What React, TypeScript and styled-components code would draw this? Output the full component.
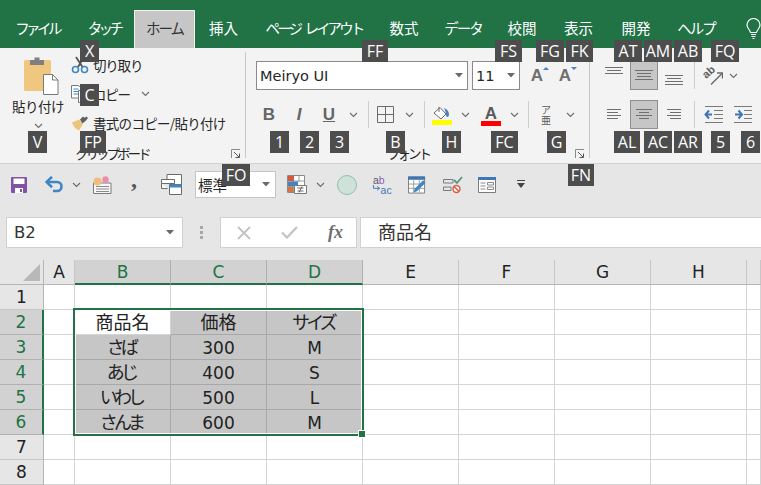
import React from 'react';
import styled, { createGlobalStyle } from 'styled-components';

const GREEN = '#217346';
const FONT = '"DejaVu Sans", "Noto Sans CJK JP", sans-serif';
const CJK = '"Noto Sans CJK JP", "DejaVu Sans", sans-serif';

const GlobalStyle = createGlobalStyle`
  html, body { margin: 0; padding: 0; background: #fff; }
  body { font-family: ${FONT}; overflow: hidden; }
`;

const TABS = [
  { label: 'ファイル', w: 74, ls: -3.6 },
  { label: 'タッチ', w: 60, ls: -3.6 },
  { label: 'ホーム', w: 61, ls: -2 },
  { label: '挿入', w: 57, ls: 0 },
  { label: 'ページ\u00a0レイアウト', w: 124, ls: -2.9 },
  { label: '数式', w: 56, ls: 0 },
  { label: 'データ', w: 62, ls: -2 },
  { label: '校閲', w: 56, ls: 0 },
  { label: '表示', w: 57, ls: 0 },
  { label: '開発', w: 58, ls: 0 },
  { label: 'ヘルプ', w: 62, ls: -2 },
];

const KEY_TIPS = [
  ['X', 80, 40, 19], ['C', 80, 84, 19], ['V', 28, 131, 19], ['FP', 80, 131, 26],
  ['FF', 362, 40, 26], ['FS', 495, 40, 27], ['FG', 536, 40, 28], ['FK', 566, 40, 27],
  ['AT', 614, 40, 28], ['AM', 644, 40, 28], ['AB', 674, 40, 28], ['FQ', 711, 40, 28],
  ['1', 270, 131, 19], ['2', 300, 131, 19], ['3', 330, 131, 19], ['B', 386, 131, 19],
  ['H', 442, 131, 19], ['FC', 491, 131, 27], ['G', 547, 131, 19],
  ['AL', 614, 131, 26], ['AC', 644, 131, 28], ['AR', 674, 131, 28], ['5', 711, 131, 19], ['6', 741, 131, 19],
  ['FN', 568, 164, 26], ['FO', 222, 164, 28],
] as const;

// the last column runs off the window, its letter is out of view
const COLUMNS = ['A', 'B', 'C', 'D', 'E', 'F', 'G', 'H', ''];
const SELECTED_COLUMNS = ['B', 'C', 'D'];
type CellData = { text: string; ja?: boolean; kana?: boolean };
const TABLE: Record<number, CellData[]> = {
  2: [{ text: '商品名', ja: true }, { text: '価格', ja: true }, { text: 'サイズ', ja: true, kana: true }],
  3: [{ text: 'さば', ja: true, kana: true }, { text: '300' }, { text: 'M' }],
  4: [{ text: 'あじ', ja: true, kana: true }, { text: '400' }, { text: 'S' }],
  5: [{ text: 'いわし', ja: true, kana: true }, { text: '500' }, { text: 'L' }],
  6: [{ text: 'さんま', ja: true, kana: true }, { text: '600' }, { text: 'M' }],
};

const Chevron = () => (
  <svg width="9" height="6" viewBox="0 0 9 6">
    <path d="M1 1l3.5 3.5L8 1" fill="none" stroke="#6b6b6b" strokeWidth="1.1" />
  </svg>
);

const Caret = () => (
  <svg width="8" height="5" viewBox="0 0 8 5">
    <path d="M0 0h8L4 4.5z" fill="#6a6a6a" />
  </svg>
);

const Launcher = () => (
  <svg width="10" height="10" viewBox="0 0 10 10">
    <path d="M.5 9V.5H9" fill="none" stroke="#8a8a8a" />
    <path d="M3 3l5 5M4.5 8.5h4v-4" fill="none" stroke="#555" />
  </svg>
);

const PasteIcon = () => (
  <svg width="36" height="39" viewBox="0 0 36 39">
    <rect x="0" y="4" width="27" height="31" rx="1.5" fill="#f0c77e" />
    <path d="M6 9V4h4.5V1.5h5V4H20v5z" fill="#7f7f7f" />
    <path d="M19.5 18.5h9l5.5 5.5v14.5H19.5z" fill="#fff" stroke="#7a7a7a" />
    <path d="M28.5 18.5v5.5H34" fill="none" stroke="#7a7a7a" />
  </svg>
);

const ScissorsIcon = () => (
  <svg width="18" height="19" viewBox="0 0 18 19">
    <path d="M5 2l6.5 10M13 2L7 12" stroke="#555" strokeWidth="1.8" fill="none" />
    <circle cx="4.5" cy="14.5" r="3" fill="none" stroke="#3f86c6" strokeWidth="1.6" />
    <circle cx="13.5" cy="14.5" r="3" fill="none" stroke="#3f86c6" strokeWidth="1.6" />
  </svg>
);

const CopyIcon = () => (
  <svg width="20" height="18" viewBox="0 0 20 18">
    <path d="M.5.5h7l2 2V13h-9z" fill="#fff" stroke="#7a7a7a" />
    <path d="M2.5 4h5M2.5 6.5h5M2.5 9h5" stroke="#3f86c6" />
    <path d="M7.5 5.5h7l2 2V17.5h-9z" fill="#fff" stroke="#7a7a7a" />
  </svg>
);

const BrushIcon = () => (
  <svg width="18" height="16" viewBox="0 0 18 16">
    <path d="M1 7.5L8 4.5l4 4.5-4 6.5C5 14.5 2 11 1 7.5z" fill="#eec47c" />
    <path d="M9 4.5L12 1.5l1.5 1.2 2-1.2 1.5 1.5-2 2.5-3.5 3z" fill="#5f5f5f" />
  </svg>
);

const BorderIcon = () => (
  <svg width="17" height="17" viewBox="0 0 17 17">
    <path d="M.5.5h16v16H.5zM8.5.5v16M.5 8.5h16" fill="none" stroke="#6a6a6a" />
  </svg>
);

const BucketIcon = () => (
  <svg width="20" height="14" viewBox="0 0 20 14">
    <path d="M2 7l6-5.5L14 8l-5 5z" fill="#fff" stroke="#6a6a6a" />
    <path d="M7 1v5" stroke="#6a6a6a" />
    <path d="M12 2c3 1 5 3.5 5 6.5 0 1.5-.8 2.5-1.6 2.5-.8 0-1.4-1-1.4-2.5C14 6.5 13 4 12 2z" fill="#4a80bd" />
  </svg>
);

const OrientIcon = () => (
  <svg width="20" height="19" viewBox="0 0 20 19">
    <text x="3" y="13" fontSize="11" fill="#5f5f5f" fontFamily="Liberation Sans, sans-serif" fontWeight="700" transform="rotate(-40 3 13)">ab</text>
    <path d="M8 18.5L19 7.5" stroke="#6a6a6a" strokeWidth="1.4" />
    <path d="M14 7h5.5v5.5" fill="none" stroke="#6a6a6a" strokeWidth="1.4" />
  </svg>
);

const IndentIcon = ({ flip }: { flip?: boolean }) => (
  <svg width="19" height="17" viewBox="0 0 19 17">
    <path d={flip ? 'M0 .5h18M10 4.5h8M10 8.5h8M10 12.5h8M0 16.5h18' : 'M1 .5h18M10 4.5h9M10 8.5h9M10 12.5h9M1 16.5h18'} stroke="#7a7a7a" />
    {flip
      ? <path d="M1 8.5h6M4.5 4.5l3.5 4-3.5 4" fill="none" stroke="#3f76b5" strokeWidth="2" />
      : <path d="M8 8.5H2M5 4.5l-3.5 4 3.5 4" fill="none" stroke="#3f76b5" strokeWidth="2" />}
  </svg>
);

const SaveIcon = () => (
  <svg width="16" height="16" viewBox="0 0 16 16">
    <path d="M0 1a1 1 0 011-1h14a1 1 0 011 1v14a1 1 0 01-1 1H1a1 1 0 01-1-1z" fill="#8253a5" />
    <path d="M2.5 1.5h11V7h-11z" fill="#fff" />
    <path d="M4 11h8v5H4z" fill="#fff" />
    <path d="M9 12h2v3H9z" fill="#8253a5" />
  </svg>
);

const UndoIcon = () => (
  <svg width="19" height="17" viewBox="0 0 19 17">
    <path d="M2.5 6H12c6 0 6 9 0 9H8" fill="none" stroke="#3f86c6" strokeWidth="2.6" />
    <path d="M7 .8L1.500 6 7 11.2" fill="none" stroke="#3f86c6" strokeWidth="2.6" />
  </svg>
);

const NewStyleIcon = () => (
  <svg width="19" height="18" viewBox="0 0 19 18">
    <path d="M.5 7H18v10.5H.5z" fill="#f8f8f8" stroke="#7a7a7a" />
    <path d="M3 10.5h13M3 13h13M3 15.5h13" stroke="#8a8a8a" />
    <circle cx="4.5" cy="5.5" r="4" fill="#efbd7e" />
    <circle cx="12.5" cy="3.5" r="3.2" fill="#eb8fa7" />
  </svg>
);

const WindowsIcon = () => (
  <svg width="21" height="21" viewBox="0 0 21 21">
    <path d="M6 6V.5h14.5v13H15" fill="#fff" stroke="#6a6a6a" />
    <path d="M.5 5.5h13v4H.5zM.5 9.5v5h6" fill="#fff" stroke="#6a6a6a" />
    <path d="M8.5 10.5h12v10h-12z" fill="#fff" stroke="#6a6a6a" />
    <path d="M8.5 10.5h12v3h-12z" fill="#3f86c6" />
  </svg>
);

const CondFormatIcon = () => (
  <svg width="20" height="19" viewBox="0 0 20 19">
    <path d="M.5.5h17v17H.5z" fill="#fff" stroke="#8a8a8a" />
    <path d="M6.5 1v16M12 1v6M1 6h17M1 11.5h6" stroke="#9a9a9a" />
    <path d="M1 1h6v5H1z" fill="#d9573a" />
    <path d="M1 6.5h10V11H1z" fill="#3f86c6" />
    <path d="M1 12h5v5H1z" fill="#e0703f" />
    <path d="M7.5 10.5h12v8h-12z" fill="#fff" stroke="#7a7a7a" />
    <path d="M10.5 13h6M10.5 16h6M15 11.5l-3 6" stroke="#666" />
  </svg>
);

const ReplaceIcon = () => (
  <svg width="21" height="21" viewBox="0 0 21 21">
    <text x="1" y="9.5" fontSize="11" fontFamily="Liberation Sans, sans-serif">
      <tspan fill="#555">a</tspan><tspan fill="#8f5fb5">b</tspan>
    </text>
    <text x="9" y="20" fontSize="11" fontFamily="Liberation Sans, sans-serif" fill="#3f76b5">ac</text>
    <path d="M1.5 11v3.5H8M5.5 12.5l2.5 2-2.500 2" fill="none" stroke="#3f76b5" />
  </svg>
);

const FormIcon = () => (
  <svg width="19" height="18" viewBox="0 0 19 18">
    <path d="M.5.5h17v17H.5z" fill="#fff" stroke="#7a7a7a" />
    <path d="M0 0h18v3.5H0z" fill="#3f76b5" />
    <path d="M6 4v13M12 4v13M1 8h17M1 12.5h17" stroke="#9a9a9a" />
    <path d="M6 17l1-4 9-9 2.5 2.5-9 9z" fill="#3f86c6" />
  </svg>
);

const ValidationIcon = () => (
  <svg width="20" height="18" viewBox="0 0 20 18">
    <path d="M.5 3.5H10V7H.5zM.5 11H8v3.5H.5z" fill="none" stroke="#7a7a7a" />
    <path d="M11 4l3 3 5-6" fill="none" stroke="#4f9a7e" strokeWidth="1.8" />
    <circle cx="13.5" cy="13" r="3.5" fill="#fff" stroke="#e0583f" strokeWidth="1.4" />
    <path d="M11 10.5l5 5" stroke="#e0583f" strokeWidth="1.4" />
  </svg>
);

const FormTableIcon = () => (
  <svg width="18" height="16" viewBox="0 0 18 16">
    <path d="M.5.5h17v15H.5z" fill="#fff" stroke="#7a7a7a" />
    <path d="M0 0h18v3H0z" fill="#3f76b5" />
    <path d="M2.5 6h5M2.5 9h5M2.5 12h5" stroke="#8a8a8a" />
    <path d="M9.5 5.5h6V8h-6zM9.5 10h6v2.500h-6z" fill="none" stroke="#8a8a8a" />
  </svg>
);

const CustomizeIcon = () => (
  <svg width="8" height="9" viewBox="0 0 8 9">
    <path d="M0 .5h8" stroke="#444" />
    <path d="M0 3h8L4 8z" fill="#444" />
  </svg>
);

const CancelIcon = () => (
  <svg width="14" height="14" viewBox="0 0 14 14">
    <path d="M1 1l12 12M13 1L1 13" stroke="#c3c3c3" strokeWidth="1.8" />
  </svg>
);

const EnterIcon = () => (
  <svg width="17" height="13" viewBox="0 0 17 13">
    <path d="M1 6.5l5 5L16 1" fill="none" stroke="#c3c3c3" strokeWidth="2.2" />
  </svg>
);

const BulbIcon = () => (
  <svg width="15" height="22" viewBox="0 0 15 22">
    <path d="M4.5 14.5C4 11.5 1 10.5 1 7a6.5 6.5 0 0113 0c0 3.500-3 4.500-3.500 7.500z" fill="none" stroke="#fff" strokeWidth="1.2" />
    <path d="M5 16.5h5M5.5 18.5h4M6.5 20.5h2" stroke="#fff" strokeWidth="1.2" />
  </svg>
);

const ALIGN_LINES = {
  top: [[0, 0, 18], [2, 3, 14], [0, 6, 18]],
  middle: [[0, 0, 18], [2, 3, 14], [2, 6, 14], [0, 9, 18]],
  bottom: [[0, 0, 18], [2, 3, 14], [0, 6, 18], [0, 9, 18]],
  left: [[2, 0, 14], [2, 3, 11], [2, 6, 14], [2, 9, 11]],
  center: [[1, 0, 16], [4, 3, 10], [1, 6, 16], [4, 9, 10]],
  right: [[2, 0, 14], [5, 3, 11], [2, 6, 14], [5, 9, 11]],
};

const AlignLines = ({ kind }: { kind: keyof typeof ALIGN_LINES }) => (
  <svg width="18" height="11" viewBox="0 0 18 11">
    {ALIGN_LINES[kind].map(([x, y, w]) => (
      <path key={y} d={`M${x} ${y + 0.5}h${w}`} stroke="#6f6f6f" />
    ))}
  </svg>
);

export default function App() {
  return (
    <Frame>
      <GlobalStyle />
      <TabBar>
        {TABS.map((tab) => (
          <Tab key={tab.label} $w={tab.w} $active={tab.label === 'ホーム'} $ls={tab.ls}>{tab.label}</Tab>
        ))}
        <BulbSlot><BulbIcon /></BulbSlot>
      </TabBar>

      <Ribbon>
        <ClipboardGroup>
          <ClipboardBody>
            <PasteButton>
              <PasteIconBox><PasteIcon /></PasteIconBox>
              <PasteLabel>貼り付け</PasteLabel>
              <Chevron />
            </PasteButton>
            <ClipboardList>
              <ClipboardRow><ClipIcon><ScissorsIcon /></ClipIcon><ClipText>切り取り</ClipText></ClipboardRow>
              <ClipboardRow>
                <ClipIcon><CopyIcon /></ClipIcon>
                <ClipText>コピー</ClipText>
                <CopyChevron><Chevron /></CopyChevron>
              </ClipboardRow>
              <ClipboardRow><ClipIcon><BrushIcon /></ClipIcon><ClipText $wide>書式のコピー/貼り付け</ClipText></ClipboardRow>
            </ClipboardList>
          </ClipboardBody>
          <GroupFooter>
            <GroupLabel $left={75}>クリップボード</GroupLabel>
            <LauncherBox $right={4}><Launcher /></LauncherBox>
          </GroupFooter>
        </ClipboardGroup>
        <GroupDivider />

        <FontGroup>
          <ToolRow>
            <FontCombo $w={212}>Meiryo UI<Caret /></FontCombo>
            <FontCombo $w={48} $ml={4}>11<Caret /></FontCombo>
            <Slot $w={30} $ml={2}><GrowLetter>A<GrowMark $up /></GrowLetter></Slot>
            <Slot $w={26}><GrowLetter>A<GrowMark /></GrowLetter></Slot>
          </ToolRow>
          <ToolRow>
            <Slot $w={30}><StyleLetter>B</StyleLetter></Slot>
            <Slot $w={30}><StyleLetter $italic>I</StyleLetter></Slot>
            <Slot $w={30}><StyleLetter $underline>U</StyleLetter></Slot>
            <Slot $w={18}><Chevron /></Slot>
            <Slot $w={12}><ToolDivider /></Slot>
            <Slot $w={23}><BorderIcon /></Slot>
            <Slot $w={24}><Chevron /></Slot>
            <Slot $w={6}><ToolDivider /></Slot>
            <Slot $w={30}><ColorStack><BucketIcon /><ColorBar $color="#ffff00" /></ColorStack></Slot>
            <Slot $w={16}><Chevron /></Slot>
            <Slot $w={36}><ColorStack><ColorLetter>A</ColorLetter><ColorBar $color="#ff0000" /></ColorStack></Slot>
            <Slot $w={10}><Chevron /></Slot>
            <Slot $w={18}><ToolDivider /></Slot>
            <Slot $w={18}><PhoneticStack><span>ア</span><span>亜</span></PhoneticStack></Slot>
            <Slot $w={30}><Chevron /></Slot>
          </ToolRow>
          <GroupFooter>
            <GroupLabel $left={141}>フォント</GroupLabel>
            <LauncherBox $right={4}><Launcher /></LauncherBox>
          </GroupFooter>
        </FontGroup>
        <GroupDivider />

        <AlignGroup>
          <AlignRow>
            <AlignButton><AlignAt $offset={-3}><AlignLines kind="top" /></AlignAt></AlignButton>
            <AlignButton $active><AlignLines kind="middle" /></AlignButton>
            <AlignButton><AlignAt $offset={5}><AlignLines kind="bottom" /></AlignAt></AlignButton>
            <Slot $w={8}><ToolDivider /></Slot>
            <Slot $w={30}><OrientIcon /></Slot>
            <Slot $w={10}><Chevron /></Slot>
          </AlignRow>
          <AlignRow>
            <AlignButton><AlignLines kind="left" /></AlignButton>
            <AlignButton $active><AlignLines kind="center" /></AlignButton>
            <AlignButton><AlignLines kind="right" /></AlignButton>
            <Slot $w={8}><ToolDivider /></Slot>
            <Slot $w={30}><IndentIcon /></Slot>
            <Slot $w={30}><IndentIcon flip /></Slot>
          </AlignRow>
        </AlignGroup>
      </Ribbon>

      <QuickAccess>
        <Slot $w={22}><SaveIcon /></Slot>
        <Slot $w={20} $ml={14}><UndoIcon /></Slot>
        <Slot $w={12} $ml={6}><Chevron /></Slot>
        <Slot $w={20} $ml={10}><NewStyleIcon /></Slot>
        <Slot $w={20} $ml={12}><CommaMark>,</CommaMark></Slot>
        <Slot $w={22} $ml={16}><WindowsIcon /></Slot>
        <StyleCombo>標準<Caret /></StyleCombo>
        <Slot $w={20} $ml={11}><CondFormatIcon /></Slot>
        <Slot $w={12} $ml={7}><Chevron /></Slot>
        <Slot $w={20} $ml={11}><StatusCircle /></Slot>
        <Slot $w={20} $ml={15}><ReplaceIcon /></Slot>
        <Slot $w={18} $ml={16}><FormIcon /></Slot>
        <Slot $w={20} $ml={17}><ValidationIcon /></Slot>
        <Slot $w={18} $ml={15}><FormTableIcon /></Slot>
        <Slot $w={10} $ml={20}><CustomizeIcon /></Slot>
      </QuickAccess>

      <FormulaBar>
        <NameBox>B2<Caret /></NameBox>
        <Grip />
        <FormulaButtons>
          <Slot $w={45}><CancelIcon /></Slot>
          <Slot $w={47}><EnterIcon /></Slot>
          <Slot $w={45}><FxMark>fx</FxMark></Slot>
        </FormulaButtons>
        <FormulaInput>商品名</FormulaInput>
      </FormulaBar>

      <Sheet>
        <CornerCell />
        {COLUMNS.map((col) => (
          <ColumnHead key={col} $selected={SELECTED_COLUMNS.includes(col)}>{col}</ColumnHead>
        ))}
        {[1, 2, 3, 4, 5, 6, 7, 8].map((row) => (
          <React.Fragment key={row}>
            <RowHead $selected={!!TABLE[row]}>{row}</RowHead>
            {COLUMNS.map((col) => {
              const index = SELECTED_COLUMNS.indexOf(col);
              const cell = TABLE[row] && index >= 0 ? TABLE[row][index] : undefined;
              const isActive = row === 2 && col === 'B';
              return (
                <Cell key={col} $selected={!!cell && !isActive} $ja={cell?.ja} $kana={cell?.kana}>
                  {cell?.text}
                </Cell>
              );
            })}
          </React.Fragment>
        ))}
        <Selection><FillHandle /></Selection>
      </Sheet>

      {KEY_TIPS.map(([label, x, y, w]) => (
        <KeyTip key={label} $x={x} $y={y} $w={w}>{label}</KeyTip>
      ))}
    </Frame>
  );
}

const Frame = styled.div`
  position: relative;
  width: 761px;
  height: 485px;
  overflow: hidden;
  background: #e6e6e6;
  color: #262626;
`;

const TabBar = styled.div`
  display: flex;
  height: 48px;
  background: ${GREEN};
  padding-top: 10px;
  box-sizing: border-box;
`;

const Tab = styled.div<{ $w: number; $active?: boolean; $ls: number }>`
  flex: none;
  box-sizing: border-box;
  width: ${({ $w }) => $w}px;
  height: 38px;
  display: flex;
  align-items: center;
  justify-content: center;
  padding-bottom: 4px;
  font-family: ${CJK};
  font-size: 14.5px;
  letter-spacing: ${({ $ls }) => $ls}px;
  word-spacing: 4px;
  white-space: nowrap;
  color: ${({ $active }) => ($active ? '#333' : '#fff')};
  background: ${({ $active }) => ($active ? '#c6c6c6' : 'transparent')};
  border: ${({ $active }) => ($active ? '1px solid #f0f0f0' : 'none')};
  border-bottom: none;
`;

const BulbSlot = styled.div`
  flex: none;
  margin: 0 0 0 19px;
  padding-top: 8px;
`;

const Ribbon = styled.div`
  display: flex;
  box-sizing: border-box;
  height: 116px;
  background: #f3f3f3;
  border-bottom: 1px solid #d2d2d2;
`;

const GroupDivider = styled.div`
  flex: none;
  width: 1px;
  margin: 4px 0 5px;
  background: #c8c8c8;
`;

const ClipboardGroup = styled.div`
  position: relative;
  flex: none;
  width: 245px;
`;

const ClipboardBody = styled.div`
  display: flex;
`;

const PasteButton = styled.div`
  flex: none;
  width: 76px;
  display: flex;
  flex-direction: column;
  align-items: center;
  padding-top: 8px;
`;

const PasteIconBox = styled.div`
  height: 39px;
  margin-left: 8px;
`;

const PasteLabel = styled.div`
  margin: 1px 0 7px;
  font-family: ${CJK};
  font-size: 13.5px;
  line-height: 20px;
  letter-spacing: -0.5px;
`;

const ClipboardList = styled.div`
  display: flex;
  flex-direction: column;
  padding: 2px 0 0 0;
  margin-left: -6px;
`;

const ClipboardRow = styled.div`
  display: flex;
  align-items: center;
  height: 29px;
`;

const ClipIcon = styled.div`
  flex: none;
  width: 23px;
  display: flex;
  align-items: center;
  padding-left: 1px;
  box-sizing: border-box;
`;

const ClipText = styled.span<{ $wide?: boolean }>`
  font-family: ${CJK};
  font-size: 13.5px;
  letter-spacing: ${({ $wide }) => ($wide ? '-0.7px' : '-1.2px')};
  white-space: nowrap;
`;

const CopyChevron = styled.span`
  margin-left: 11px;
  line-height: 0;
`;

const GroupFooter = styled.div`
  position: absolute;
  left: 0;
  right: 0;
  bottom: 0;
  height: 24px;
`;

const GroupLabel = styled.span<{ $left: number }>`
  position: absolute;
  left: ${({ $left }) => $left}px;
  top: 4px;
  font-family: ${CJK};
  font-size: 13.5px;
  line-height: 20px;
  letter-spacing: -3px;
  white-space: nowrap;
`;

const LauncherBox = styled.span<{ $right: number }>`
  position: absolute;
  right: ${({ $right }) => $right}px;
  top: 10px;
  line-height: 0;
`;

const FontGroup = styled.div`
  position: relative;
  flex: none;
  width: 343px;
  box-sizing: border-box;
  padding: 13px 0 0 10px;
  display: flex;
  flex-direction: column;
  gap: 10px;
`;

const ToolRow = styled.div`
  display: flex;
  align-items: center;
  height: 29px;
  margin-left: -2px;

  &:first-child {
    margin-left: 0;
  }
`;

const Slot = styled.div<{ $w: number; $ml?: number }>`
  flex: none;
  width: ${({ $w }) => $w}px;
  margin-left: ${({ $ml }) => $ml ?? 0}px;
  height: 100%;
  display: flex;
  align-items: center;
  justify-content: center;
`;

const FontCombo = styled.div<{ $w: number; $ml?: number }>`
  flex: none;
  box-sizing: border-box;
  width: ${({ $w }) => $w}px;
  margin-left: ${({ $ml }) => $ml ?? 0}px;
  height: 29px;
  padding: 0 4px 0 3px;
  display: flex;
  align-items: center;
  justify-content: space-between;
  background: #fff;
  border: 1px solid #8a8a8a;
  font-size: 14.5px;
`;

const GrowLetter = styled.span`
  position: relative;
  font-family: "Liberation Sans", sans-serif;
  font-size: 17px;
  font-weight: 700;
  color: #6f6f6f;
`;

const GrowMark = styled.i<{ $up?: boolean }>`
  position: absolute;
  right: -6px;
  top: 1px;
  width: 0;
  height: 0;
  border-left: 3px solid transparent;
  border-right: 3px solid transparent;
  border-bottom: ${({ $up }) => ($up ? '3px solid #4a80bd' : 'none')};
  border-top: ${({ $up }) => ($up ? 'none' : '3px solid #4a80bd')};
`;

const StyleLetter = styled.span<{ $italic?: boolean; $underline?: boolean }>`
  font-family: "Liberation Sans", sans-serif;
  font-size: 17px;
  font-weight: 700;
  color: #666;
  font-style: ${({ $italic }) => ($italic ? 'italic' : 'normal')};
  text-decoration: ${({ $underline }) => ($underline ? 'underline' : 'none')};
`;

const ToolDivider = styled.div`
  width: 1px;
  height: 27px;
  background: #cdcdcd;
`;

const ColorStack = styled.div`
  display: flex;
  flex-direction: column;
  align-items: center;
  width: 20px;
  padding-top: 2px;
`;

const ColorLetter = styled.span`
  font-family: "Liberation Sans", sans-serif;
  font-size: 17px;
  line-height: 15px;
  font-weight: 700;
  color: #5a5a5a;
`;

const ColorBar = styled.div<{ $color: string }>`
  width: 20px;
  height: 5px;
  background: ${({ $color }) => $color};
`;

const PhoneticStack = styled.div`
  display: flex;
  flex-direction: column;
  align-items: center;
  font-family: ${CJK};
  font-size: 10px;
  line-height: 10px;
  color: #5a5a5a;
`;

const AlignGroup = styled.div`
  flex: 1;
  padding: 13px 0 0 10px;
  display: flex;
  flex-direction: column;
  gap: 10px;
`;

const AlignRow = styled.div`
  display: flex;
  gap: 2px;
  height: 29px;
  align-items: center;

  ${Slot} {
    margin-right: -2px;
  }
`;

const AlignButton = styled.div<{ $active?: boolean }>`
  flex: none;
  box-sizing: border-box;
  width: 28px;
  height: 29px;
  display: flex;
  align-items: center;
  justify-content: center;
  background: ${({ $active }) => ($active ? '#c6c6c6' : 'transparent')};
  border: 1px solid ${({ $active }) => ($active ? '#8f8f8f' : 'transparent')};
`;

const AlignAt = styled.div<{ $offset: number }>`
  line-height: 0;
  transform: translateY(${({ $offset }) => $offset}px);
`;

const QuickAccess = styled.div`
  display: flex;
  align-items: center;
  box-sizing: border-box;
  height: 44px;
  padding: 0 0 3px 8px;
  background: #e6e6e6;
`;

const CommaMark = styled.span`
  font-family: "Liberation Serif", serif;
  font-size: 24px;
  font-weight: 700;
  line-height: 1;
  color: #555;
  margin-top: -12px;
`;

const StyleCombo = styled.div`
  flex: none;
  box-sizing: border-box;
  width: 81px;
  height: 27px;
  margin-left: 13px;
  padding: 0 5px 0 2px;
  display: flex;
  align-items: center;
  justify-content: space-between;
  background: #fff;
  border: 1px solid #c6c6c6;
  font-family: ${CJK};
  font-size: 14.5px;
`;

const StatusCircle = styled.div`
  width: 18px;
  height: 18px;
  border-radius: 50%;
  background: #cfe2d9;
  border: 1px solid #8fbfa9;
`;

const FormulaBar = styled.div`
  display: flex;
  box-sizing: border-box;
  height: 52px;
  padding: 9px 0 12px 6px;
  background: #e6e6e6;
`;

const NameBox = styled.div`
  flex: none;
  box-sizing: border-box;
  width: 177px;
  padding: 0 8px 0 7px;
  display: flex;
  align-items: center;
  justify-content: space-between;
  background: #fff;
  border: 1px solid #d0d0d0;
  font-size: 16.5px;
  color: #333;
`;

const Grip = styled.div`
  flex: none;
  width: 3px;
  height: 13px;
  margin: 9px 17px 0 17px;
  background: repeating-linear-gradient(#a8a8a8 0 3px, transparent 3px 5px);
`;

const FormulaButtons = styled.div`
  flex: none;
  display: flex;
  box-sizing: border-box;
  width: 137px;
  background: #fff;
  border: 1px solid #d0d0d0;
`;

const FxMark = styled.span`
  font-family: "Liberation Serif", serif;
  font-style: italic;
  font-weight: 700;
  font-size: 18px;
  color: #6f6f6f;
`;

const FormulaInput = styled.div`
  flex: 1;
  margin-left: 3px;
  padding: 0 0 3px 17px;
  display: flex;
  align-items: center;
  background: #fff;
  border: 1px solid #d0d0d0;
  border-right: none;
  font-family: ${CJK};
  font-size: 18px;
  color: #333;
`;

const Sheet = styled.div`
  position: relative;
  display: grid;
  grid-template-columns: 44px 31px repeat(7, 96px) 1fr;
  grid-auto-rows: 25px;
  background: #fff;
  font-size: 17px;
  color: #222;
`;

const CornerCell = styled.div`
  box-sizing: border-box;
  position: relative;
  background: #e6e6e6;
  border-right: 1px solid #b5b5b5;
  border-bottom: 1px solid #b5b5b5;

  &::after {
    content: '';
    position: absolute;
    right: 3px;
    bottom: 3px;
    width: 0;
    height: 0;
    border-left: 17px solid transparent;
    border-bottom: 17px solid #b8b8b8;
  }
`;

const ColumnHead = styled.div<{ $selected: boolean }>`
  box-sizing: border-box;
  display: flex;
  align-items: center;
  justify-content: center;
  background: ${({ $selected }) => ($selected ? '#d2d2d2' : '#e6e6e6')};
  color: ${({ $selected }) => ($selected ? GREEN : '#222')};
  border-right: 1px solid ${({ $selected }) => ($selected ? '#b0b0b0' : '#c6c6c6')};
  border-bottom: ${({ $selected }) => ($selected ? `2px solid ${GREEN}` : '1px solid #b5b5b5')};
`;

const RowHead = styled.div<{ $selected: boolean }>`
  box-sizing: border-box;
  display: flex;
  align-items: center;
  justify-content: center;
  background: ${({ $selected }) => ($selected ? '#d2d2d2' : '#e6e6e6')};
  color: ${({ $selected }) => ($selected ? GREEN : '#222')};
  border-right: ${({ $selected }) => ($selected ? `2px solid ${GREEN}` : '1px solid #b5b5b5')};
  border-bottom: 1px solid ${({ $selected }) => ($selected ? '#b0b0b0' : '#c6c6c6')};
`;

const Cell = styled.div<{ $selected: boolean; $ja?: boolean; $kana?: boolean }>`
  box-sizing: border-box;
  display: flex;
  align-items: center;
  justify-content: center;
  white-space: nowrap;
  padding: ${({ $ja }) => ($ja ? '0 0 3px' : '1px 0 0')};
  padding-right: ${({ $kana }) => ($kana ? 3 : 0)}px;
  font-family: ${({ $ja }) => ($ja ? CJK : FONT)};
  font-size: ${({ $ja }) => ($ja ? 18 : 17)}px;
  background: ${({ $selected }) => ($selected ? '#c6c6c6' : '#fff')};
  border-right: 1px solid ${({ $selected }) => ($selected ? '#a8a8a8' : '#d4d4d4')};
  border-bottom: 1px solid ${({ $selected }) => ($selected ? '#a8a8a8' : '#d4d4d4')};
  letter-spacing: ${({ $kana }) => ($kana ? '-3.8px' : '0')};
`;

const Selection = styled.div`
  position: absolute;
  left: 73px;
  top: 48px;
  box-sizing: border-box;
  width: 291px;
  height: 128px;
  border: 2px solid ${GREEN};
  box-shadow: inset 0 0 0 1px #fff;
  pointer-events: none;
`;

const FillHandle = styled.div`
  position: absolute;
  right: -3px;
  bottom: -3px;
  width: 6px;
  height: 6px;
  background: ${GREEN};
  outline: 1px solid #fff;
`;

const KeyTip = styled.div<{ $x: number; $y: number; $w: number }>`
  position: absolute;
  left: ${({ $x }) => $x}px;
  top: ${({ $y }) => $y}px;
  width: ${({ $w }) => $w}px;
  height: 22px;
  display: flex;
  align-items: center;
  justify-content: center;
  background: #4d4d4d;
  color: #fff;
  font-family: "Open Sans", sans-serif;
  font-size: 16px;
`;
